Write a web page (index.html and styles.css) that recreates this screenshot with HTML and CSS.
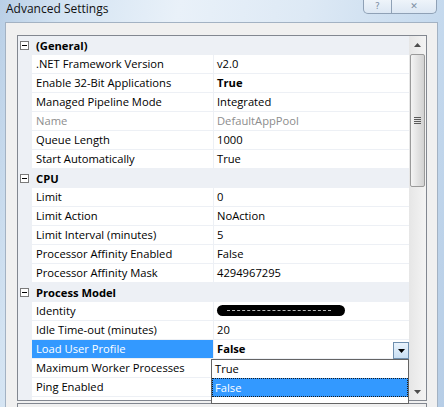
FILE: index.html
```html
<!DOCTYPE html>
<html>
<head>
<meta charset="utf-8">
<link rel="stylesheet" href="styles.css">
</head>
<body>
<div class="window">
  <div class="titlebar">
    <div class="title">Advanced Settings</div>
    <div class="caption-btns">
      <div class="cbtn help">?</div>
      <div class="cbtn close">✕</div>
    </div>
  </div>
  <div class="panel">
    <div class="grid">
      <div class="rows">
        <div class="row cat"><div class="gutter"><span class="exp"></span></div><div class="catname">(General)</div></div>
        <div class="row"><div class="gutter"></div><div class="name">.NET Framework Version</div><div class="value">v2.0</div></div>
        <div class="row"><div class="gutter"></div><div class="name">Enable 32-Bit Applications</div><div class="value bold">True</div></div>
        <div class="row"><div class="gutter"></div><div class="name">Managed Pipeline Mode</div><div class="value">Integrated</div></div>
        <div class="row"><div class="gutter"></div><div class="name dim">Name</div><div class="value dim">DefaultAppPool</div></div>
        <div class="row"><div class="gutter"></div><div class="name">Queue Length</div><div class="value">1000</div></div>
        <div class="row"><div class="gutter"></div><div class="name">Start Automatically</div><div class="value">True</div></div>
        <div class="row cat"><div class="gutter"><span class="exp"></span></div><div class="catname">CPU</div></div>
        <div class="row"><div class="gutter"></div><div class="name">Limit</div><div class="value">0</div></div>
        <div class="row"><div class="gutter"></div><div class="name">Limit Action</div><div class="value">NoAction</div></div>
        <div class="row"><div class="gutter"></div><div class="name">Limit Interval (minutes)</div><div class="value">5</div></div>
        <div class="row"><div class="gutter"></div><div class="name">Processor Affinity Enabled</div><div class="value">False</div></div>
        <div class="row"><div class="gutter"></div><div class="name">Processor Affinity Mask</div><div class="value">4294967295</div></div>
        <div class="row cat"><div class="gutter"><span class="exp"></span></div><div class="catname">Process Model</div></div>
        <div class="row"><div class="gutter"></div><div class="name">Identity</div><div class="value"><span class="redact"></span></div></div>
        <div class="row"><div class="gutter"></div><div class="name">Idle Time-out (minutes)</div><div class="value">20</div></div>
        <div class="row"><div class="gutter"></div><div class="name selected">Load User Profile</div><div class="value bold editing">False<span class="ddbtn"><svg width="7" height="4" viewBox="0 0 7 4"><path d="M0 0H7L3.5 4Z" fill="#000"/></svg></span></div></div>
        <div class="row"><div class="gutter"></div><div class="name">Maximum Worker Processes</div><div class="value"></div></div>
        <div class="row"><div class="gutter"></div><div class="name">Ping Enabled</div><div class="value"></div></div>
        <div class="row"><div class="gutter"></div><div class="name"></div><div class="value"></div></div>
      </div>
      <div class="scrollbar">
        <div class="arrow"><svg width="7" height="4" viewBox="0 0 7 4"><path d="M3.5 0L7 4H0Z" fill="#4d4d4d"/></svg></div>
        <div class="thumb"><span class="grip"></span></div>
        <div class="track"></div>
        <div class="arrow"><svg width="7" height="4" viewBox="0 0 7 4"><path d="M0 0H7L3.5 4Z" fill="#4d4d4d"/></svg></div>
      </div>
      <div class="dropdown">
        <div class="opt">True</div>
        <div class="opt sel">False</div>
      </div>
    </div>
    <div class="desc"><div class="desc-title">Load User Profile</div></div>
  </div>
</div>
</body>
</html>
```
FILE: styles.css
```css
html, body {
  margin: 0;
  padding: 0;
}
body {
  width: 444px;
  height: 407px;
  overflow: hidden;
  font-family: "Open Sans", "Noto Sans", sans-serif;
  font-size: 11.2px;
  color: #000;
  background: linear-gradient(100deg, #b9cfe6 0%, #d3e3f2 12%, #e9f1f9 35%, #dde9f5 60%, #c6daee 85%, #b6cde6 100%);
}
.window {
  display: flex;
  flex-direction: column;
  height: 407px;
}
.titlebar {
  height: 22px;
  flex: none;
  display: flex;
  justify-content: space-between;
  align-items: flex-start;
  padding: 0 7px 0 6px;
}
.title {
  font-size: 12px;
  line-height: 17px;
  color: #111;
}
.caption-btns {
  display: flex;
  height: 13px;
  border: 1px solid #8fa1b6;
  border-top: none;
  border-radius: 0 0 5px 5px;
  background: linear-gradient(#eef4fa, #dce7f3);
  color: #7d8ea3;
  font-family: "DejaVu Sans", sans-serif;
  font-size: 9px;
  line-height: 12px;
  text-align: center;
}
.cbtn {
  height: 13px;
}
.help {
  width: 27px;
  border-right: 1px solid #8fa1b6;
}
.close {
  width: 44px;
}
.panel {
  flex: 1;
  margin: 0 6px 0 5px;
  background: #f0f0f0;
  border: 1px solid #a3b2c3;
  border-bottom: none;
  padding: 12px 10px 0 11px;
}
.grid {
  position: relative;
  display: flex;
  height: 364px;
  border: 1px solid #828790;
  background: #fff;
}
.rows {
  flex: 1;
  overflow: hidden;
}
.row {
  display: flex;
  height: 19px;
}
.gutter {
  width: 14px;
  flex: none;
  background: #edf0f5;
  position: relative;
}
.name {
  width: 177px;
  flex: none;
  padding-left: 4px;
  height: 18px;
  line-height: 18px;
  border-bottom: 1px solid #edf0f5;
  border-right: 1px solid #edf0f5;
  white-space: nowrap;
  overflow: hidden;
}
.value {
  flex: 1;
  position: relative;
  padding-left: 3px;
  height: 18px;
  line-height: 18px;
  border-bottom: 1px solid #edf0f5;
  white-space: nowrap;
}
.dim {
  color: #8d8d8d;
}
.bold {
  font-weight: bold;
}
.cat {
  background: #edf0f5;
}
.catname {
  flex: 1;
  padding-left: 4px;
  line-height: 19px;
  font-weight: bold;
}
.exp {
  position: absolute;
  left: 2px;
  top: 5px;
  width: 7px;
  height: 7px;
  border: 1px solid #7a7a7a;
  background: #fff;
}
.exp::after {
  content: "";
  position: absolute;
  left: 1px;
  top: 3px;
  width: 5px;
  height: 1px;
  background: #000;
}
.selected {
  background: #3399ff;
  color: #fff;
}
.redact {
  display: inline-block;
  position: relative;
  width: 128px;
  height: 11px;
  margin-top: 3px;
  vertical-align: top;
  background: #000;
  border-radius: 6px;
}
.redact::after {
  content: "";
  position: absolute;
  left: 10px;
  right: 14px;
  top: 5px;
  border-top: 1px dashed #bbb;
}
.ddbtn {
  position: absolute;
  right: 0;
  top: 2px;
  width: 14px;
  height: 15px;
  border: 1px solid #6f8fae;
  background: linear-gradient(#e9f3fc, #c9dff3);
  display: flex;
  align-items: center;
  justify-content: center;
}
.scrollbar {
  width: 17px;
  flex: none;
  display: flex;
  flex-direction: column;
  background: linear-gradient(90deg, #e6e6e6, #f4f4f4);
}
.arrow {
  height: 17px;
  flex: none;
  display: flex;
  align-items: center;
  justify-content: center;
}
.thumb {
  height: 131px;
  margin: 1px 1px 0 1px;
  flex: none;
  border: 1px solid #9a9a9a;
  border-radius: 2px;
  background: linear-gradient(90deg, #f4f4f4, #e3e3e3 50%, #d2d2d2);
  display: flex;
  align-items: center;
  justify-content: center;
}
.grip {
  width: 7px;
  height: 7px;
  background: repeating-linear-gradient(#5a5a5a 0 1px, transparent 1px 2px);
}
.track {
  flex: 1;
}
.dropdown {
  position: absolute;
  left: 193px;
  top: 323px;
  width: 196px;
  height: 43px;
  border: 1px solid #646464;
  background: #fff;
}
.opt {
  height: 18px;
  line-height: 18px;
  padding-left: 3px;
}
.opt.sel {
  height: 17px;
  line-height: 17px;
  padding-left: 2px;
  background: #3399ff;
  color: #fff;
  border: 1px dotted #1a1a1a;
}
.desc {
  margin-top: 2px;
  border: 1px solid #828790;
  border-bottom: none;
  height: 20px;
  padding: 2px 4px 0 4px;
}
.desc-title {
  font-weight: bold;
  line-height: 14px;
}
```
